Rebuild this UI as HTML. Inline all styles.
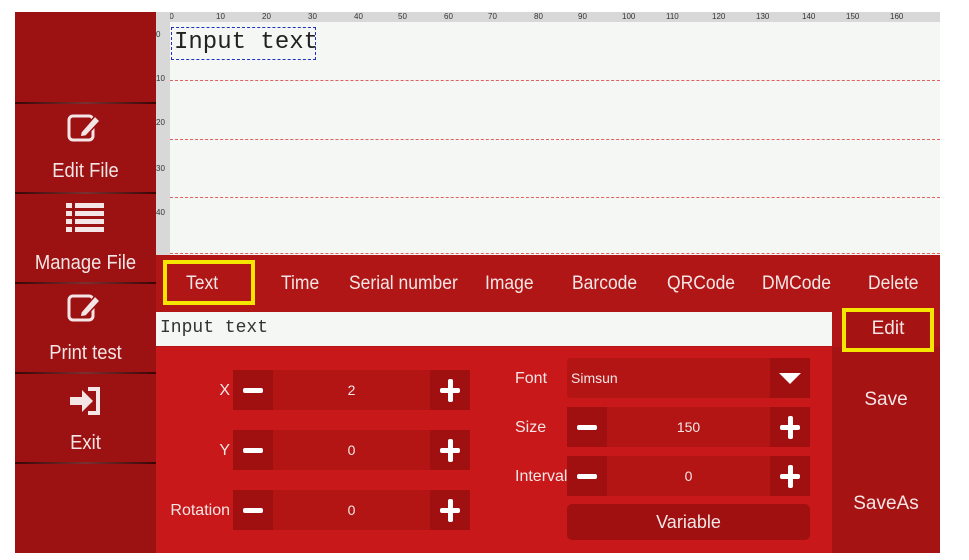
<!DOCTYPE html>
<html><head><style>
*{margin:0;padding:0;box-sizing:border-box}
body{width:969px;height:560px;background:#fff;position:relative;overflow:hidden;font-family:"Liberation Sans",sans-serif;color:#f4e6e6}
.a{position:absolute}
.side{left:15px;top:12px;width:141px;height:541px;background:#9c1111}
.sep{left:15px;width:141px;height:2px;background:linear-gradient(90deg,#3a0505,#7a3030,#3a0505)}
.lbl{width:141px;text-align:center;font-size:20px;left:15px;transform:scaleX(.92)}
.canvas{left:156px;top:12px;width:784px;height:243px;background:#f5f7f5}
.rt{left:156px;top:12px;width:784px;height:10px;background:#d8d8d8;font-size:8px;color:#333}
.rl{left:156px;top:12px;width:14px;height:243px;background:#d8d8d8;font-size:8px;color:#333}
.dash{left:170px;width:770px;border-top:1px dashed #e06060;height:0}
.panel{left:156px;top:255px;width:784px;height:298px;background:#b01616}
.tab{top:273px;font-size:19px;transform:scaleX(.92);transform-origin:left}
.ctrl{left:156px;top:347px;width:676px;height:206px;background:#c8181a}
.rc{left:832px;top:347px;width:108px;height:206px;background:#a51313}
.sp{height:40px;background:#b31414}
.bx{position:absolute;top:0;width:40px;height:40px;background:#a01010}
.bx.m::before,.bx.p::before{content:"";position:absolute;left:10px;top:18px;width:20px;height:5px;background:#fff;border-radius:2px}
.bx.p::after{content:"";position:absolute;left:18px;top:9px;width:5px;height:23px;background:#fff;border-radius:2px}
.val{position:absolute;width:100%;text-align:center;top:12px;font-size:14px}
.cl{font-size:16px;text-align:right}
</style></head><body>
<div class="a side"></div>
<div class="a sep" style="top:102px"></div>
<div class="a sep" style="top:192px"></div>
<div class="a sep" style="top:282px"></div>
<div class="a sep" style="top:372px"></div>
<div class="a sep" style="top:462px"></div>
<svg class="a" style="left:67px;top:112px" width="36" height="32" viewBox="0 0 36 32"><rect x="2" y="4" width="24" height="24" rx="4" fill="none" stroke="#f4e6e6" stroke-width="3"/><path d="M14 20 L28 4 L33 9 L19 24 L13 25Z" fill="#f4e6e6" stroke="#9c1111" stroke-width="1.5"/></svg>
<div class="a lbl" style="top:160px">Edit File</div>
<svg class="a" style="left:66px;top:203px" width="38" height="30"><g fill="#f4e6e6"><rect x="0" y="0" width="6" height="5"/><rect x="9" y="0" width="29" height="5"/><rect x="0" y="8" width="6" height="5"/><rect x="9" y="8" width="29" height="5"/><rect x="0" y="16" width="6" height="5"/><rect x="9" y="16" width="29" height="5"/><rect x="0" y="24" width="6" height="5"/><rect x="9" y="24" width="29" height="5"/></g></svg>
<div class="a lbl" style="top:252px">Manage File</div>
<svg class="a" style="left:67px;top:292px" width="36" height="32" viewBox="0 0 36 32"><rect x="2" y="4" width="24" height="24" rx="4" fill="none" stroke="#f4e6e6" stroke-width="3"/><path d="M14 20 L28 4 L33 9 L19 24 L13 25Z" fill="#f4e6e6" stroke="#9c1111" stroke-width="1.5"/></svg>
<div class="a lbl" style="top:342px">Print test</div>
<svg class="a" style="left:68px;top:387px" width="34" height="28"><path d="M2 10h12v-7l11 11-11 11v-7H2z" fill="#f4e6e6"/><path d="M20 2h10v24H20" fill="none" stroke="#f4e6e6" stroke-width="4"/></svg>
<div class="a lbl" style="top:432px">Exit</div>

<div class="a canvas"></div>
<div class="a rt"><span style="position:absolute;left:0">mm0</span><span style="position:absolute;left:60px">10</span><span style="position:absolute;left:106px">20</span><span style="position:absolute;left:152px">30</span><span style="position:absolute;left:198px">40</span><span style="position:absolute;left:242px">50</span><span style="position:absolute;left:288px">60</span><span style="position:absolute;left:332px">70</span><span style="position:absolute;left:378px">80</span><span style="position:absolute;left:422px">90</span><span style="position:absolute;left:466px">100</span><span style="position:absolute;left:510px">110</span><span style="position:absolute;left:556px">120</span><span style="position:absolute;left:600px">130</span><span style="position:absolute;left:646px">140</span><span style="position:absolute;left:690px">150</span><span style="position:absolute;left:734px">160</span></div>
<div class="a rl"><span style="position:absolute;top:18px">0</span><span style="position:absolute;top:62px">10</span><span style="position:absolute;top:106px">20</span><span style="position:absolute;top:152px">30</span><span style="position:absolute;top:196px">40</span></div>
<div class="a dash" style="top:80px"></div>
<div class="a dash" style="top:139px"></div>
<div class="a dash" style="top:197px"></div>
<div class="a dash" style="top:253px"></div>
<div class="a" style="left:171px;top:27px;width:145px;height:33px;border:1px dashed #2030c0"></div>
<div class="a" style="left:174px;top:29px;font-family:'Liberation Mono',monospace;font-size:24px;color:#222">Input text</div>

<div class="a panel"></div>
<div class="a" style="left:163px;top:260px;width:92px;height:45px;border:4px solid #f5e600"></div>
<div class="a tab" style="left:186px">Text</div>
<div class="a tab" style="left:281px">Time</div>
<div class="a tab" style="left:349px">Serial number</div>
<div class="a tab" style="left:485px">Image</div>
<div class="a tab" style="left:572px">Barcode</div>
<div class="a tab" style="left:667px">QRCode</div>
<div class="a tab" style="left:762px">DMCode</div>
<div class="a tab" style="left:868px">Delete</div>
<div class="a" style="left:156px;top:312px;width:676px;height:34px;background:#f5f7f5;font-family:'Liberation Mono',monospace;font-size:18px;color:#333;padding:6px 4px">Input text</div>
<div class="a ctrl"></div>
<div class="a rc"></div>
<div class="a" style="left:842px;top:308px;width:92px;height:44px;border:4px solid #f5e600;background:#a51313"></div>
<div class="a" style="left:842px;top:318px;width:92px;text-align:center;font-size:19px">Edit</div>
<div class="a" style="left:832px;top:389px;width:108px;text-align:center;font-size:19px">Save</div>
<div class="a" style="left:832px;top:493px;width:108px;text-align:center;font-size:19px">SaveAs</div>

<div class="a cl" style="left:160px;top:382px;width:70px">X</div>
<div class="a sp" style="left:233px;top:370px;width:237px"><div class="bx m" style="left:0"></div><div class="val">2</div><div class="bx p" style="right:0"></div></div>
<div class="a cl" style="left:160px;top:442px;width:70px">Y</div>
<div class="a sp" style="left:233px;top:430px;width:237px"><div class="bx m" style="left:0"></div><div class="val">0</div><div class="bx p" style="right:0"></div></div>
<div class="a cl" style="left:160px;top:502px;width:70px">Rotation</div>
<div class="a sp" style="left:233px;top:490px;width:237px"><div class="bx m" style="left:0"></div><div class="val">0</div><div class="bx p" style="right:0"></div></div>

<div class="a" style="left:515px;top:370px;font-size:16px">Font</div>
<div class="a sp" style="left:567px;top:358px;width:243px;border-radius:4px"><span style="position:absolute;left:4px;top:12px;font-size:14px">Simsun</span><div class="bx" style="right:0"><svg width="40" height="40"><path d="M9 15h22l-11 11z" fill="#fff"/></svg></div></div>
<div class="a" style="left:515px;top:419px;font-size:16px">Size</div>
<div class="a sp" style="left:567px;top:407px;width:243px"><div class="bx m" style="left:0"></div><div class="val">150</div><div class="bx p" style="right:0"></div></div>
<div class="a" style="left:515px;top:468px;font-size:16px">Interval</div>
<div class="a sp" style="left:567px;top:456px;width:243px"><div class="bx m" style="left:0"></div><div class="val">0</div><div class="bx p" style="right:0"></div></div>
<div class="a" style="left:567px;top:504px;width:243px;height:36px;background:#a01010;border-radius:5px;text-align:center;font-size:18px;line-height:36px">Variable</div>
</body></html>
